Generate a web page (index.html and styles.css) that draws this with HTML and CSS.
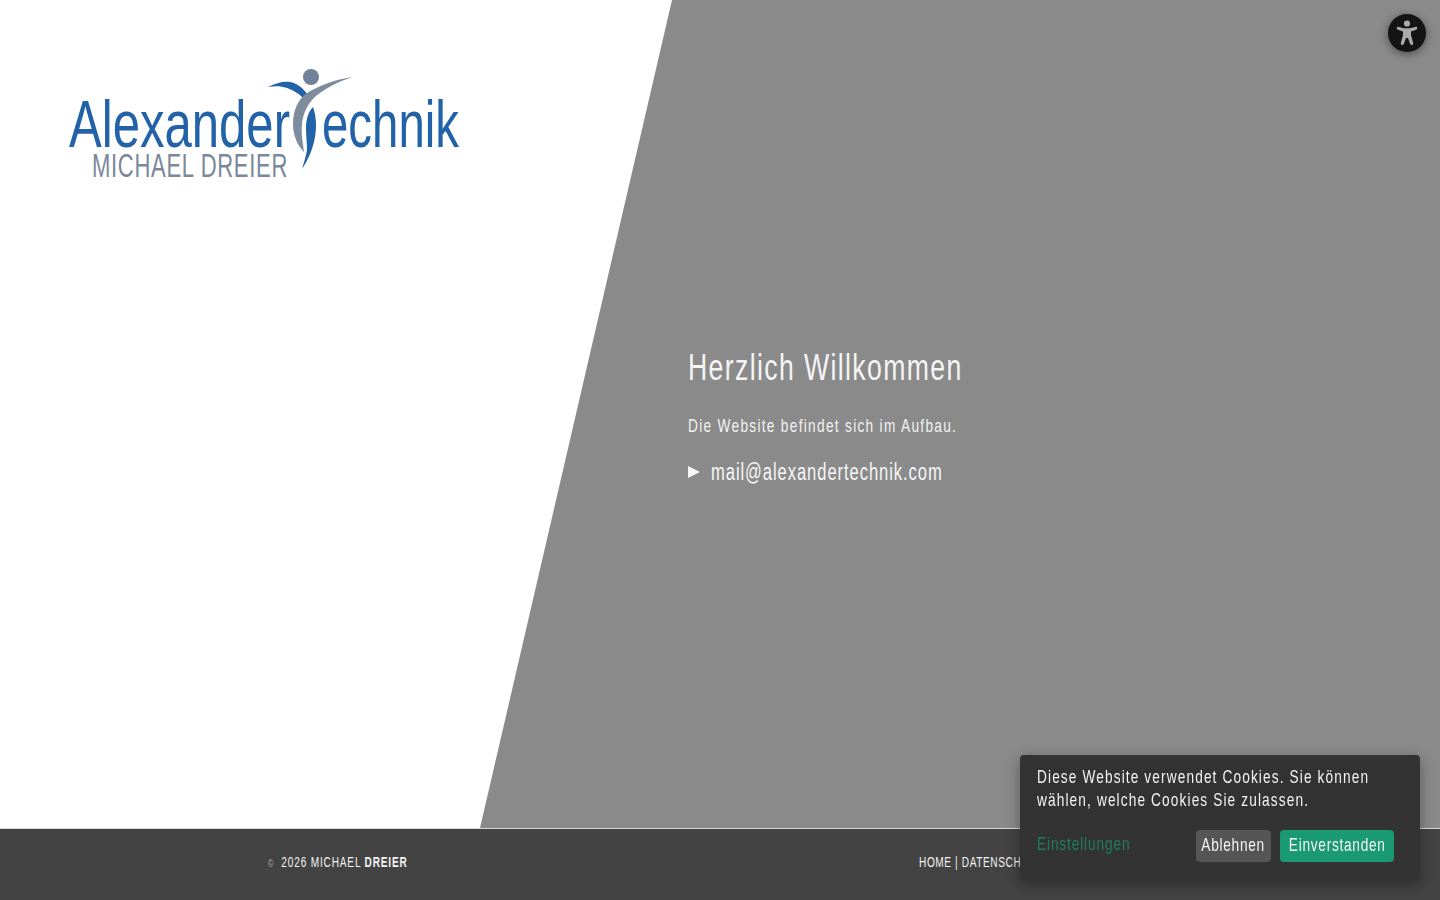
FILE: index.html
```html
<!DOCTYPE html>
<html lang="de">
<head>
    <meta charset="UTF-8">
    <meta name="viewport" content="width=device-width, initial-scale=1.0">
    <title>Alexander Technik Michael Dreier</title>
    <link rel="stylesheet" href="styles.css">
</head>
<body>
    <div class="page">
        <main class="hero">
            <div class="hero-panel"></div>
            <div class="hero-logo">
                <svg class="logo" width="410" height="125" viewBox="60 60 410 125">
                    <text class="logo-word" x="69" y="147" textLength="221" lengthAdjust="spacingAndGlyphs">Alexander</text>
                    <text class="logo-word" x="322" y="147" textLength="137" lengthAdjust="spacingAndGlyphs">echnik</text>
                    <text class="logo-name" x="92" y="177" textLength="196" lengthAdjust="spacingAndGlyphs">MICHAEL DREIER</text>
                    <circle cx="311" cy="77" r="8" fill="#6f8299"/>
                    <path fill="#2262a8" d="M268 87C276 83 283 81 290 82C297 83 303 88 307 94L303 98C298 93 293 90 287 88C281 86 275 86 268 87Z"/>
                    <path fill="#7e8c9d" d="M353 77C337 79 320 85 307 93C297 100 293 112 293 124C293 136 298 146 304 152C303 143 301 134 302 124C303 113 308 103 316 96C326 88 339 81 353 77Z"/>
                    <path fill="#2262a8" d="M313 107C308 112 306 120 306 128C306 136 307 143 307 150C306 156 304 162 302 169C308 160 313 149 315 137C317 126 316 115 313 107Z"/>
                </svg>
            </div>
            <div class="hero-text">
                <h1 class="narrow">Herzlich Willkommen</h1>
                <p class="narrow">Die Website befindet sich im Aufbau.</p>
                <a class="mail-link" href="#"><span class="narrow">mail@alexandertechnik.com</span></a>
            </div>
        </main>

        <footer class="footer">
            <div class="copyright narrow"><span class="copy-sign">©</span> 2026 MICHAEL <b>DREIER</b></div>
            <nav class="footer-nav narrow">HOME | DATENSCHUTZ | IMPRESSUM</nav>
        </footer>
    </div>

    <button class="a11y-btn" aria-label="Barrierefreiheit">
        <svg width="26" height="26" viewBox="0 0 26 26">
            <circle cx="13" cy="3.5" r="3.1" fill="#aaa"/>
            <path fill="#aaa" d="M2.8 8.2C2.8 7 3.8 6.6 4.8 6.9L10 8.3H16L21.2 6.9C22.2 6.6 23.2 7 23.2 8.2C23.2 9 22.8 9.5 22 9.8L17 11.5V15L19.2 23C19.5 24.3 18.7 25 17.8 25C17 25 16.5 24.6 16.2 23.9L14 18H12L9.8 23.9C9.5 24.6 9 25 8.2 25C7.3 25 6.5 24.3 6.8 23L9 15V11.5L4 9.8C3.2 9.5 2.8 9 2.8 8.2Z"/>
        </svg>
    </button>

    <div class="cookie-box">
        <p class="narrow">Diese Website verwendet Cookies. Sie können wählen, welche Cookies Sie zulassen.</p>
        <div class="cookie-actions">
            <a class="cookie-settings narrow" href="#">Einstellungen</a>
            <button class="cookie-btn cookie-btn-no"><span class="narrow-mid">Ablehnen</span></button>
            <button class="cookie-btn cookie-btn-ok"><span class="narrow-mid">Einverstanden</span></button>
        </div>
    </div>
</body>
</html>
```

FILE: styles.css
```css
html, body {
    margin: 0;
    height: 100%;
}
body {
    font-family: "Liberation Sans", Arial, sans-serif;
    color: #f2f2f2;
    background: #fff;
    overflow: hidden;
}
/* no narrow font installed, so squeeze the regular one */
.narrow {
    transform: scaleX(.72);
    transform-origin: 0 50%;
}
.narrow-mid {
    flex: none;
    transform: scaleX(.72);
}
.page {
    display: flex;
    flex-direction: column;
    height: 900px;
}
.hero {
    flex: 1;
    position: relative;
    display: grid;
    grid-template-columns: 688px 1fr;
}
.hero-panel {
    position: absolute;
    inset: 0;
    background: #8a8a8a;
    clip-path: polygon(672px 0, 100% 0, 100% 100%, 480px 100%);
}
.hero-logo {
    position: relative;
    padding: 60px 0 0 60px;
}
.logo {
    display: block;
    overflow: visible;
}
.logo-word {
    font-size: 67px;
    fill: #2262a8;
}
.logo-name {
    font-size: 33px;
    fill: #7a8899;
    letter-spacing: 1px;
}
.hero-text {
    position: relative;
    padding-top: 349px;
    white-space: nowrap;
}
.hero-text h1 {
    margin: 0;
    font-size: 37px;
    line-height: 37px;
    font-weight: normal;
    letter-spacing: 1.9px;
    color: #f4f4f4;
}
.hero-text p {
    margin: 28px 0 0;
    font-size: 19px;
    line-height: 24px;
    letter-spacing: 1.8px;
}
.mail-link {
    display: flex;
    align-items: center;
    margin-top: 21px;
    font-size: 23px;
    line-height: 26px;
    letter-spacing: 1.3px;
    color: #f6f6f6;
    text-decoration: none;
}
.mail-link::before {
    content: "";
    width: 0;
    height: 0;
    margin-right: 11px;
    border-left: 12px solid #f6f6f6;
    border-top: 6.5px solid transparent;
    border-bottom: 6.5px solid transparent;
}
.footer {
    height: 72px;
    box-sizing: border-box;
    border-top: 1px solid #d8d8d8;
    background: #434343;
    padding: 0 0 5px 268px;
    display: grid;
    grid-template-columns: 651px 1fr;
    align-items: center;
    font-size: 14px;
    white-space: nowrap;
}
.copyright {
    letter-spacing: 1.15px;
}
.copy-sign {
    margin-right: 5px;
    font-size: 10px;
    color: #aaa;
}
.footer-nav {
    letter-spacing: .85px;
}
.a11y-btn {
    position: fixed;
    top: 14px;
    right: 14px;
    width: 38px;
    height: 38px;
    padding: 0;
    border: none;
    border-radius: 50%;
    background: #141414;
    box-shadow: 0 2px 9px rgba(0,0,0,0.45);
    display: flex;
    align-items: center;
    justify-content: center;
}
.cookie-box {
    position: fixed;
    right: 20px;
    bottom: 20px;
    width: 400px;
    height: 125px;
    box-sizing: border-box;
    padding: 10px 26px 0 17px;
    background: #333;
    border-radius: 4px;
    box-shadow: 0 4px 14px rgba(0,0,0,0.35);
}
.cookie-box p {
    width: 139%;
    margin: 0;
    font-size: 19px;
    line-height: 23px;
    letter-spacing: 1.55px;
}
.cookie-actions {
    display: flex;
    align-items: center;
    gap: 9px;
    margin-top: 19px;
}
.cookie-settings {
    margin: 0 auto 4px 0;
    font-size: 19px;
    letter-spacing: 1.2px;
    color: #1f7d5e;
    text-decoration: none;
}
.cookie-btn {
    display: flex;
    justify-content: center;
    align-items: center;
    height: 32px;
    padding: 0 0 2px;
    border: none;
    border-radius: 4px;
    font-family: inherit;
    font-size: 19px;
    letter-spacing: 1px;
    white-space: nowrap;
    color: #f4f4f4;
    background: #555;
}
.cookie-btn-no {
    width: 75px;
}
.cookie-btn-ok {
    width: 114px;
    background: #1a9a72;
}
```
